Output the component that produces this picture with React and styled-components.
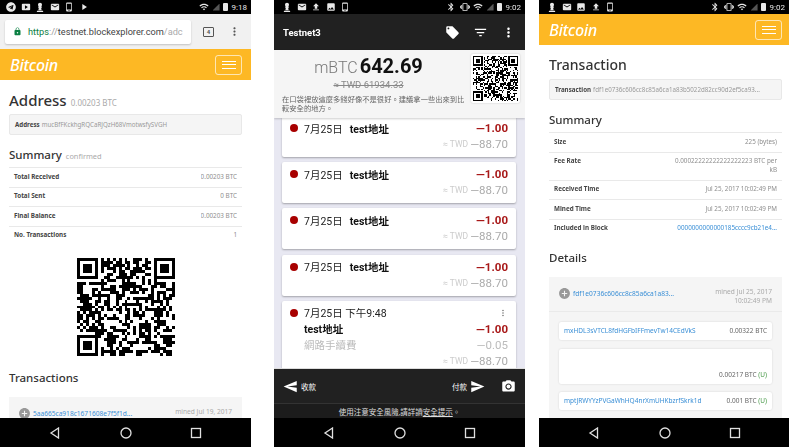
import React from "react";
import styled, { createGlobalStyle } from "styled-components";
import { FaChessPawn, FaTelegram } from "react-icons/fa";
import {
  MdAddCircle, MdBluetooth, MdCameraAlt, MdFileUpload, MdFilterList, MdImage, MdLocalOffer,
  MdLock, MdMail, MdMoreVert, MdPhoneAndroid, MdPlayArrow, MdSend,
  MdSmartDisplay, MdVibration, MdWifi,
} from "react-icons/md";

const GlobalStyle = createGlobalStyle`
  html, body { margin: 0; padding: 0; background: #fff; }
  * { box-sizing: border-box; }
`;

const ORANGE = "#fdb824";
const SITE_FONT = '"Noto Sans", "Open Sans", sans-serif';
const APP_FONT = 'Roboto, "Noto Sans CJK TC", sans-serif';

const Page = styled.div`
  display: flex;
  width: 789px;
  height: 447px;
  overflow: hidden;
  filter: blur(0.35px);
`;

const Screen = styled.div`
  display: flex;
  flex-direction: column;
  flex: none;
  width: ${p => p.$width}px;
  height: 447px;
  margin-left: ${p => p.$offset || 0}px;
  overflow: hidden;
  font-family: ${SITE_FONT};
`;

const StatusBar = styled.div`
  display: flex;
  flex: none;
  align-items: center;
  justify-content: space-between;
  height: 14px;
  padding: 0 4px 0 ${p => p.$left}px;
  background: #000;
  color: #e8e8e8;
  font-family: Roboto, sans-serif;
`;

const StatusGroup = styled.div`
  display: flex;
  align-items: center;
  gap: ${p => p.$gap}px;
  font-size: 10px;
`;

const Clock = styled.span`
  font-size: 8px;
`;

const Battery = styled.span`
  display: block;
  width: 5px;
  height: 8px;
  border-radius: 1px;
  background: #e8e8e8;
`;

const NoSignal = styled.span`
  display: block;
  width: 7px;
  height: 7px;
  background: #555;
  clip-path: polygon(100% 0, 100% 100%, 0 100%);
`;

const ChromeBar = styled.div`
  display: flex;
  flex: none;
  align-items: center;
  height: 35px;
  padding: 0 10px 0 5px;
  background: #f1f1f1;
  color: #555;
`;

const UrlBox = styled.div`
  display: flex;
  align-items: center;
  width: 188px;
  height: 24px;
  padding: 0 5px 0 8px;
  gap: 6px;
  background: #fff;
  border-radius: 2px;
  box-shadow: 0 1px 2px rgba(0, 0, 0, 0.2);
  color: #0b8043;
  font-size: 9.2px;
  font-family: Roboto, sans-serif;
  white-space: nowrap;
  overflow: hidden;

  svg {
    flex: none;
    width: 9px;
    height: 9px;
  }
`;

const UrlText = styled.span`
  color: ${p => p.$color};
`;

const TabCount = styled.span`
  display: flex;
  align-items: center;
  justify-content: center;
  width: 11px;
  height: 10px;
  margin-left: 12px;
  border: 1.5px solid #555;
  border-radius: 1px;
  font-size: 6px;
  font-weight: 700;
  font-family: Roboto, sans-serif;
`;

const ChromeMenu = styled.span`
  display: flex;
  margin-left: 14px;
  font-size: 13px;
`;

const SiteBar = styled.div`
  display: flex;
  flex: none;
  align-items: center;
  justify-content: space-between;
  height: ${p => p.$height}px;
  padding: 0 ${p => p.$right}px 0 ${p => p.$left}px;
  background: ${ORANGE};
`;

const Brand = styled.span`
  color: #fff;
  font-size: 16px;
  font-style: italic;
  font-weight: 500;
  letter-spacing: -0.3px;
`;

const Burger = styled.span`
  display: flex;
  flex-direction: column;
  align-items: center;
  justify-content: center;
  gap: 2.5px;
  width: 27px;
  height: 20px;
  border: 1px solid rgba(255, 255, 255, 0.65);
  border-radius: 3px;
`;

const BurgerLine = styled.span`
  display: block;
  width: 14px;
  height: 1px;
  background: #fff;
`;

const Content = styled.div`
  flex: 1;
  min-height: 0;
  overflow: hidden;
  padding: 0 ${p => p.$right}px 0 ${p => p.$left}px;
  background: #fff;
`;

const Heading = styled.div`
  display: flex;
  align-items: baseline;
  gap: 4px;
  height: 20px;
  margin-top: ${p => p.$top || 10}px;
  color: #333;
  font-size: ${p => p.$size || 11.5}px;
  line-height: 20px;
  font-weight: 500;
  white-space: nowrap;
`;

const HeadingNote = styled.span`
  color: #aaa;
  font-size: ${p => p.$size}px;
  font-weight: 400;
`;

const Well = styled.div`
  display: flex;
  align-items: center;
  gap: 2px;
  height: 21px;
  margin-top: 4px;
  padding: 0 5px;
  background: #f5f5f5;
  border: 1px solid #e8e8e8;
  border-radius: 2px;
  color: #999;
  font-size: 6.2px;
  white-space: nowrap;
  overflow: hidden;
`;

const Strong = styled.b`
  color: #444;
`;

const Table = styled.div`
  margin-top: 2px;
`;

const TableRow = styled.div`
  display: flex;
  justify-content: space-between;
  min-height: 19.6px;
  padding: 4.5px 5px 5.5px;
  border-top: 1px solid #e9e9e9;
  font-size: 6.3px;
  line-height: 8.5px;
`;

const RowLabel = styled.span`
  flex: none;
  color: #444;
  font-weight: 700;
`;

const RowValue = styled.span`
  max-width: 110px;
  color: ${p => p.$link ? "#3a8fd6" : "#8e8e8e"};
  text-align: right;
  white-space: ${p => p.$link ? "nowrap" : "normal"};
  overflow: hidden;
`;

const QrHolder = styled.div`
  display: flex;
  justify-content: center;
  margin-top: 13px;
`;

const TxBox = styled.div`
  margin-top: 9px;
  background: #f5f5f5;
`;

const TxHead = styled.div`
  display: flex;
  align-items: flex-start;
  justify-content: space-between;
  height: 35px;
  padding: 9.500px 10px 0 9px;
  border-bottom: 1px solid #eaeaea;
  font-size: 6.6px;
`;

const TxLink = styled.div`
  display: flex;
  align-items: center;
  gap: 2px;
  height: 13px;
  color: #3a8fd6;

  svg {
    flex: none;
    color: #999;
    width: 13px;
    height: 13px;
  }
`;

const TxTime = styled.div`
  color: #aaa;
  text-align: right;
  line-height: 9px;
`;

const TxCards = styled.div`
  display: flex;
  flex-direction: column;
  gap: 8.5px;
  padding: 10px;
`;

const TxCard = styled.div`
  display: flex;
  align-items: flex-end;
  justify-content: space-between;
  height: ${p => p.$height}px;
  padding: 0 5px 5px;
  background: #fff;
  border-radius: 2px;
  box-shadow: 0 0 2px rgba(0, 0, 0, 0.15);
  color: #666;
  font-size: 6.5px;
  line-height: 8px;
  white-space: nowrap;
`;

const Link = styled.span`
  color: #3a8fd6;
`;

const Unspent = styled.span`
  color: #4a9a4a;
`;

const Toolbar = styled.div`
  display: flex;
  flex: none;
  align-items: center;
  justify-content: space-between;
  height: 36px;
  padding: 0 9px;
  background: #212121;
  color: #fff;
  font-family: ${APP_FONT};
  font-size: 9.5px;
  font-weight: 700;
`;

const ToolIcons = styled.div`
  display: flex;
  align-items: center;
  gap: 13px;
  font-size: 15px;
`;

const Balance = styled.div`
  display: flex;
  flex: none;
  gap: 6px;
  height: 68px;
  padding: 4px 5px 0 8px;
  background: #f5f5f5;
  font-family: ${APP_FONT};
  box-shadow: 0 1px 2px rgba(0, 0, 0, 0.2);
  position: relative;
  z-index: 1;
`;

const BalanceText = styled.div`
  display: flex;
  flex: 1;
  flex-direction: column;
  min-width: 0;
`;

const Amount = styled.div`
  display: flex;
  align-items: baseline;
  justify-content: center;
  gap: 2px;
  height: 24px;
  padding-right: 10px;
  line-height: 24px;
`;

const Unit = styled.span`
  color: #777;
  font-size: 16px;
  font-weight: 300;
`;

const Total = styled.span`
  color: #111;
  font-size: 20px;
  font-weight: 700;
`;

const Fiat = styled.div`
  margin: 1px 0 5px;
  padding-right: 10px;
  color: #888;
  font-size: 9.5px;
  line-height: 11px;
  text-align: center;
  text-decoration: line-through;
`;

const Advice = styled.div`
  color: #666;
  font-size: 7.3px;
  line-height: 9px;
`;

const QrCard = styled.div`
  display: flex;
  flex: none;
  align-items: center;
  justify-content: center;
  width: 49px;
  height: 49px;
  background: #fff;
  border-radius: 2px;
  box-shadow: 0 0 2px rgba(0, 0, 0, 0.2);
`;

const ListArea = styled.div`
  display: flex;
  flex: 1;
  flex-direction: column;
  gap: 5.2px;
  min-height: 0;
  margin-top: -2px;
  padding: 0 9px 0 8px;
  overflow: hidden;
  background: #e8e8f2;
  font-family: ${APP_FONT};
`;

const Card = styled.div`
  flex: none;
  height: ${p => p.$height}px;
  padding: 4px 8px 0;
  background: #fff;
  border-radius: 2px;
  box-shadow: 0 1px 2px rgba(0, 0, 0, 0.3);
`;

const CardRow = styled.div`
  display: flex;
  align-items: center;
  justify-content: ${p => p.$end ? "flex-end" : "flex-start"};
  height: 16px;
  gap: ${p => p.$gap || 0}px;
  padding-left: ${p => p.$indent || 0}px;
  white-space: nowrap;
`;

const Dot = styled.span`
  flex: none;
  width: 8px;
  height: 8px;
  margin-right: 6px;
  border-radius: 50%;
  background: #a80000;
`;

const DateText = styled.span`
  margin-right: 7px;
  color: #222;
  font-size: 10.5px;
`;

const Who = styled.span`
  color: #111;
  font-size: 10.5px;
  font-weight: 700;
`;

const Money = styled.span`
  margin-left: auto;
  color: ${p => p.$muted ? "#bbb" : "#a81818"};
  font-size: 11.5px;
  font-weight: ${p => p.$muted ? 400 : 700};
`;

const FeeName = styled.span`
  color: #bbb;
  font-size: 10.5px;
`;

const CardMenu = styled.span`
  display: flex;
  margin-left: auto;
  color: #777;
  font-size: 10px;
`;

const FiatUnit = styled.span`
  color: #ccc;
  font-size: 8.5px;
`;

const FiatMoney = styled.span`
  color: #aaa;
  font-size: 11.5px;
`;

const ActionBar = styled.div`
  display: flex;
  flex: none;
  align-items: center;
  height: 35px;
  padding: 0 9px;
  background: #212121;
  border-top: 1px solid #ddd;
  color: #fff;
  font-family: ${APP_FONT};
  font-size: 7.5px;
  position: relative;
  z-index: 1;
`;

const Action = styled.div`
  display: flex;
  align-items: center;
  gap: 3px;
  margin-left: ${p => p.$auto ? "auto" : 0};
`;

const Camera = styled.span`
  display: flex;
  margin-left: 16px;
  font-size: 15px;
`;

const FlippedSend = styled(MdSend)`
  transform: rotate(180deg);
`;

const SafetyBar = styled.div`
  display: flex;
  flex: none;
  align-items: center;
  justify-content: center;
  height: 15px;
  background: #1c1c1c;
  border-top: 1px solid #333;
  color: #ddd;
  font-family: ${APP_FONT};
  font-size: 7.5px;
`;

const Underlined = styled.span`
  text-decoration: underline;
`;

const NavBar = styled.div`
  display: flex;
  flex: none;
  align-items: center;
  gap: 58.5px;
  height: 29px;
  padding-left: 49px;
  background: #000;
  position: relative;
  z-index: 1;
`;

const NavIcon = styled.svg`
  flex: none;
  width: 12px;
  height: 12px;
  fill: none;
  stroke: #e0e0e0;
  stroke-width: 1.3;
`;

const Navigation = () => (
  <NavBar>
    <NavIcon viewBox="0 0 12 12"><path d="M9.5 1 2 6l7.500 5z" /></NavIcon>
    <NavIcon viewBox="0 0 12 12"><circle cx="6" cy="6" r="5" /></NavIcon>
    <NavIcon viewBox="0 0 12 12"><rect x="1.500" y="1.500" width="9" height="9" /></NavIcon>
  </NavBar>
);

// seeded noise, the modules of these codes can't be read from the picture anyway
const qrPath = (size, seed) => {
  let state = seed;
  const next = () => {
    state = (state * 1664525 + 1013904223) % 4294967296;
    return state / 4294967296;
  };
  const inFinder = (x, y, ox, oy) => x >= ox && x < ox + 7 && y >= oy && y < oy + 7;
  const finderOn = (x, y, ox, oy) => {
    const dx = x - ox;
    const dy = y - oy;
    const ring = Math.max(Math.abs(dx - 3), Math.abs(dy - 3));
    return ring !== 2;
  };
  const origins = [[0, 0], [size - 7, 0], [0, size - 7]];
  let d = "";
  for (let y = 0; y < size; y++) {
    for (let x = 0; x < size; x++) {
      const noise = next() > 0.5;
      const origin = origins.find(o => inFinder(x, y, o[0], o[1]));
      const quiet = origins.some(o => inFinder(x, y, o[0] - 1, o[1] - 1) || inFinder(x, y, o[0] + 1, o[1] + 1));
      const on = origin ? finderOn(x, y, origin[0], origin[1]) : quiet ? false : noise;
      if (on) d += `M${x} ${y}h1v1h-1z`;
    }
  }
  return d;
};

const QrCode = ({ size, modules, seed }) => (
  <svg width={size} height={size} viewBox={`0 0 ${modules} ${modules}`} shapeRendering="crispEdges">
    <path d={qrPath(modules, seed)} fill="#000" />
  </svg>
);

const Status = ({ padLeft, left, right, time }) => (
  <StatusBar $left={padLeft}>
    <StatusGroup $gap={4.6}>{left}</StatusGroup>
    <StatusGroup $gap={3.5}>{right}<Clock>{time}</Clock></StatusGroup>
  </StatusBar>
);

const SiteHeader = ({ height, left, right }) => (
  <SiteBar $height={height} $left={left} $right={right}>
    <Brand>Bitcoin</Brand>
    <Burger><BurgerLine /><BurgerLine /><BurgerLine /></Burger>
  </SiteBar>
);

const TxItem = () => (
  <Card $height={41}>
    <CardRow>
      <Dot /><DateText>7月25日</DateText><Who>test地址</Who>
      <Money>—1.00</Money>
    </CardRow>
    <CardRow $end $gap={2}>
      <FiatUnit>≈ TWD</FiatUnit><FiatMoney>—88.70</FiatMoney>
    </CardRow>
  </Card>
);

const addressRows = [
  ["Total Received", "0.00203 BTC"],
  ["Total Sent", "0 BTC"],
  ["Final Balance", "0.00203 BTC"],
  ["No. Transactions", "1"],
];

const txRows = [
  ["Size", "225 (bytes)"],
  ["Fee Rate", "0.00022222222222222223 BTC per kB"],
  ["Received Time", "Jul 25, 2017 10:02:49 PM"],
  ["Mined Time", "Jul 25, 2017 10:02:49 PM"],
  ["Included in Block", "0000000000000185cccc9cb21e4...", true],
];

const App = () => (
  <Page>
    <GlobalStyle />

    <Screen $width={251}>
      <Status
        padLeft={6}
        left={<><FaTelegram /><MdSmartDisplay /><FaChessPawn /><MdMail /><MdPhoneAndroid /><MdPlayArrow /></>}
        right={<><MdWifi /><NoSignal /><Battery /></>}
        time="9:18"
      />
      <ChromeBar>
        <UrlBox>
          <MdLock />
          <span>
            https<UrlText $color="#999">://</UrlText>
            <UrlText $color="#444">testnet.blockexplorer.com</UrlText>
            <UrlText $color="#aaa">/adc</UrlText>
          </span>
        </UrlBox>
        <TabCount>4</TabCount>
        <ChromeMenu><MdMoreVert /></ChromeMenu>
      </ChromeBar>
      <SiteHeader height={31} left={10} right={9} />
      <Content $left={9} $right={9}>
        <Heading $size={15}>
          Address <HeadingNote $size={8}>0.00203 BTC</HeadingNote>
        </Heading>
        <Well><Strong>Address</Strong> mucBfFKckhgRQCaRJQzH68VmotwsfySVGH</Well>
        <Heading>Summary <HeadingNote $size={7.4}>confirmed</HeadingNote></Heading>
        <Table>
          {addressRows.map(([label, value]) => (
            <TableRow key={label}>
              <RowLabel>{label}</RowLabel>
              <RowValue>{value}</RowValue>
            </TableRow>
          ))}
        </Table>
        <QrHolder><QrCode size={98} modules={33} seed={77} /></QrHolder>
        <Heading $top={12}>Transactions</Heading>
        <TxBox>
          <TxHead>
            <TxLink><MdAddCircle />5aa665ca918c1671608e7f5f1d...</TxLink>
            <TxTime>mined Jul 19, 2017<br />11:24:15 AM</TxTime>
          </TxHead>
        </TxBox>
      </Content>
      <Navigation />
    </Screen>

    <Screen $width={251} $offset={23}>
      <Status
        padLeft={8}
        left={<><FaChessPawn /><MdMail /><MdFileUpload /><MdImage /><MdPhoneAndroid /></>}
        right={<><MdBluetooth /><MdVibration /><MdWifi /><NoSignal /><Battery /></>}
        time="9:02"
      />
      <Toolbar>
        Testnet3
        <ToolIcons><MdLocalOffer /><MdFilterList /><MdMoreVert /></ToolIcons>
      </Toolbar>
      <Balance>
        <BalanceText>
          <Amount><Unit>mBTC</Unit><Total>642.69</Total></Amount>
          <Fiat>≈ TWD 61934.33</Fiat>
          <Advice>在口袋裡放這麼多錢好像不是很好。建議拿一些出來到比較安全的地方。</Advice>
        </BalanceText>
        <QrCard><QrCode size={45} modules={33} seed={1234} /></QrCard>
      </Balance>
      <ListArea>
        <TxItem /><TxItem /><TxItem /><TxItem />
        <Card $height={80}>
          <CardRow>
            <Dot /><DateText>7月25日 下午9:48</DateText>
            <CardMenu><MdMoreVert /></CardMenu>
          </CardRow>
          <CardRow $indent={14}><Who>test地址</Who><Money>—1.00</Money></CardRow>
          <CardRow $indent={14}><FeeName>網路手續費</FeeName><Money $muted>—0.05</Money></CardRow>
          <CardRow $end $gap={2}><FiatUnit>≈ TWD</FiatUnit><FiatMoney>—88.70</FiatMoney></CardRow>
        </Card>
      </ListArea>
      <ActionBar>
        <Action><FlippedSend size={15} />收款</Action>
        <Action $auto>付款<MdSend size={15} /></Action>
        <Camera><MdCameraAlt /></Camera>
      </ActionBar>
      <SafetyBar>使用注意安全風險,請詳讀<Underlined>安全提示</Underlined>。</SafetyBar>
      <Navigation />
    </Screen>

    <Screen $width={250} $offset={14}>
      <Status
        padLeft={8}
        left={<><FaChessPawn /><MdMail /><MdImage /><MdFileUpload /><MdPhoneAndroid /></>}
        right={<><MdBluetooth /><MdVibration /><MdWifi /><NoSignal /><Battery /></>}
        time="9:02"
      />
      <SiteHeader height={31} left={10} right={7} />
      <Content $left={10} $right={7}>
        <Heading $size={14}>Transaction</Heading>
        <Well><Strong>Transaction</Strong> fdf1e0736c606cc8c85a6ca1a83b5022d82cc90d2ef5ca93...</Well>
        <Heading>Summary</Heading>
        <Table>
          {txRows.map(([label, value, link]) => (
            <TableRow key={label}>
              <RowLabel>{label}</RowLabel>
              <RowValue $link={link}>{value}</RowValue>
            </TableRow>
          ))}
        </Table>
        <Heading>Details</Heading>
        <TxBox>
          <TxHead>
            <TxLink><MdAddCircle />fdf1e0736c606cc8c85a6ca1a83...</TxLink>
            <TxTime>mined Jul 25, 2017<br />10:02:49 PM</TxTime>
          </TxHead>
          <TxCards>
            <TxCard $height={18}><Link>mxHDL3sVTCL8fdHGFbIFFmevTw14CEdVkS</Link><span>0.00322 BTC</span></TxCard>
            <TxCard $height={35}><span /><span>0.00217 BTC <Unspent>(U)</Unspent></span></TxCard>
            <TxCard $height={18}><Link>mptJRWYYzPVGaWhHQ4nrXmUHKbzrfSkrk1d</Link><span>0.001 BTC <Unspent>(U)</Unspent></span></TxCard>
          </TxCards>
        </TxBox>
      </Content>
      <Navigation />
    </Screen>
  </Page>
);

export default App;
